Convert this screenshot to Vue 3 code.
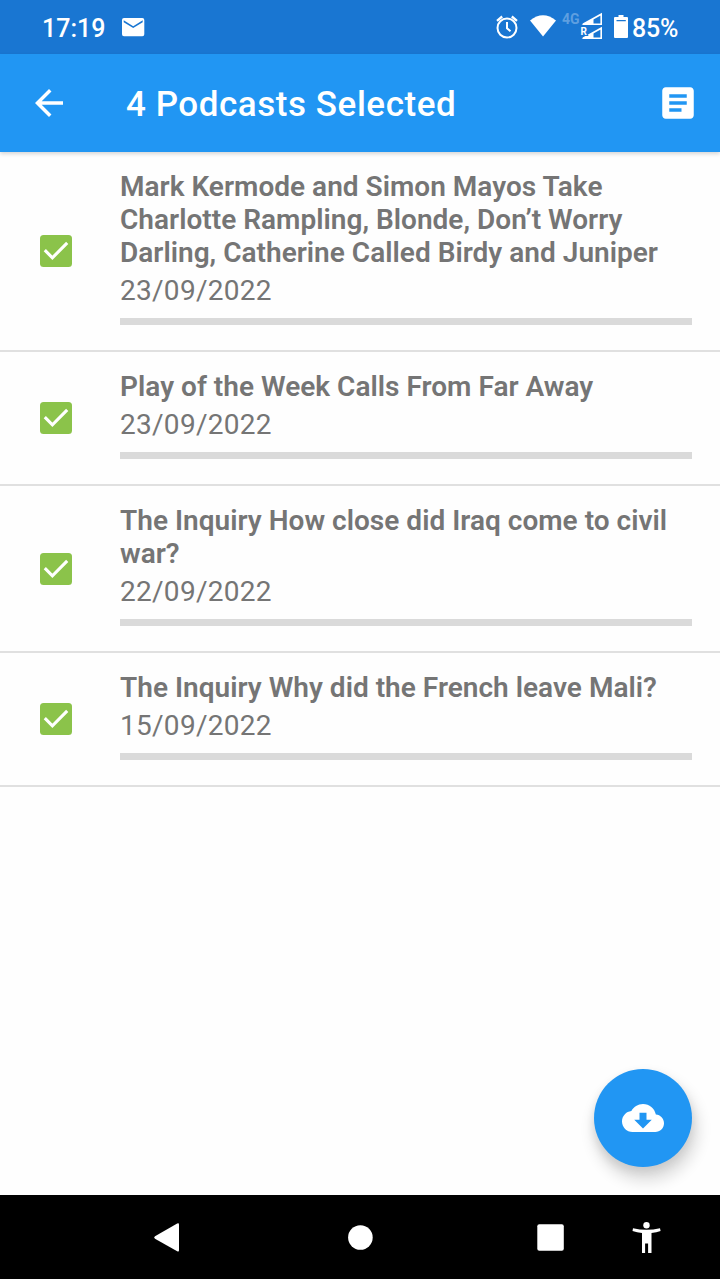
<script setup>
const podcasts = [
  { title: 'Mark Kermode and Simon Mayos Take Charlotte Rampling, Blonde, Don’t Worry Darling, Catherine Called Birdy and Juniper', date: '23/09/2022' },
  { title: 'Play of the Week Calls From Far Away', date: '23/09/2022' },
  { title: 'The Inquiry How close did Iraq come to civil war?', date: '22/09/2022' },
  { title: 'The Inquiry Why did the French leave Mali?', date: '15/09/2022' },
]
</script>

<template>
  <div class="screen">
    <header class="status">
      <span class="clock">17:19</span>
      <svg class="mail" width="28" height="28" viewBox="0 0 28 28"><path fill="#fff" d="M5 5h18.300q2 0 2 2v14.200q0 2-2 2H5q-2 0-2-2V7q0-2 2-2zM4.700 7.300v1.900l9.500 5.900 9.500-5.900V7.300l-9.500 5.900z" fill-rule="evenodd" /></svg>
      <svg class="indicators" width="136" height="54" viewBox="0 0 136 54">
        <g fill="none" stroke="#fff" stroke-width="2">
          <circle cx="13" cy="28" r="9.500" />
          <path d="M13 22v6.300l3.500 3" />
          <path d="M3 20.800l5.200-4.300M23 20.800l-5.200-4.300" stroke-width="2.300" />
        </g>
        <path fill="#fff" d="M36 20.600Q49 9.800 62 20.600L49 36.500z" />
        <text class="network" x="68" y="24">4G</text>
        <g fill="none" stroke="#fff" stroke-width="1.600">
          <path d="M89 24.200 107.200 14.200v10zM98.700 19.500v4.700" />
          <path d="M89 38.200 107.200 28.200v10zM98.700 33.500v4.700" />
        </g>
        <path fill="#fff" d="M87.500 25 98.500 19v6zM87.500 39 98.500 33v6z" />
        <text class="roaming" x="86.500" y="34.500">R</text>
        <path fill="#fff" fill-rule="evenodd" d="M124.500 15h5v2h3.500q1 0 1 1v19q0 1-1 1h-12q-1 0-1-1V18q0-1 1-1h3.500zM122.500 20v1.300h9.300v-1.300z" />
      </svg>
      <span class="battery">85%</span>
    </header>

    <nav class="toolbar">
      <svg class="back" width="42" height="42" viewBox="0 0 24 24"><path fill="#fff" d="M20 11H7.830l5.590-5.590L12 4l-8 8 8 8 1.410-1.410L7.830 13H20z" /></svg>
      <h1>4 Podcasts Selected</h1>
      <svg class="notes" width="42" height="42" viewBox="0 0 24 24"><path fill="#fff" d="M19 3H5c-1.100 0-2 .9-2 2v14c0 1.100.9 2 2 2h14c1.100 0 2-.9 2-2V5c0-1.100-.9-2-2-2zm-5 14H7v-2h7zm3-4H7v-2h10zm0-4H7V7h10z" /></svg>
    </nav>

    <main>
      <article v-for="item in podcasts" :key="item.title" class="row">
        <svg class="check" width="32" height="32" viewBox="0 0 32 32">
          <rect width="32" height="32" rx="3.500" fill="#8bc34a" />
          <path d="M4.800 15.200 12.400 22.800 27.200 7.900" fill="none" stroke="#fff" stroke-width="3.100" />
        </svg>
        <div class="body">
          <h2>{{ item.title }}</h2>
          <p>{{ item.date }}</p>
          <div class="bar"></div>
        </div>
      </article>
      <button class="fab" aria-label="Download">
        <svg width="42" height="42" viewBox="0 0 24 24"><path fill="#fff" d="M19.350 10.040C18.670 6.590 15.640 4 12 4 9.110 4 6.600 5.640 5.350 8.040 2.340 8.360 0 10.910 0 14c0 3.310 2.690 6 6 6h13c2.760 0 5-2.240 5-5 0-2.640-2.050-4.780-4.650-4.960zM17 13l-5 5-5-5h3V9h4v4z" /></svg>
      </button>
    </main>

    <footer class="navbar">
      <svg width="720" height="84" viewBox="0 0 720 84" fill="#fff">
        <path d="M155 41.300 177.200 28.500q1.800-.9 1.800 1v25.800q0 1.900-1.800 1L155 43.700q-1.800-1.200 0-2.400z" />
        <circle cx="360.400" cy="42.500" r="12.300" />
        <rect x="537.300" y="29.300" width="26.500" height="26.500" rx="2" />
        <circle cx="646.500" cy="30.300" r="3.200" />
        <path d="M633 33.300q13.500 3 27 0l.6 2.800q-4 1.400-9.100 1.900V58h-3.400v-9.500h-3V58h-3.100V38q-5-.5-9.500-1.900z" />
      </svg>
    </footer>
  </div>
</template>

<style>
html, body { margin: 0; background: #fefefe; }
</style>

<style scoped>
.screen { display: flex; flex-direction: column; width: 720px; height: 1280px; overflow: hidden; background: #fefefe; font-family: Roboto, sans-serif; }
.status { display: flex; align-items: center; flex: none; height: 54px; box-sizing: border-box; padding-left: 42px; background: #1976d2; color: #fff; font-size: 25px; font-weight: 500; }
.clock { width: 77px; padding-top: 2px; }
.indicators { margin-left: 347px; }
.network { font-size: 14px; font-weight: 700; fill: #5e9fe0; }
.roaming { font-size: 10px; font-weight: 700; fill: #fff; stroke: #1976d2; stroke-width: 2px; paint-order: stroke; }
.battery { padding-top: 2px; margin-left: 2px; letter-spacing: -.2px; }
.toolbar { display: flex; align-items: center; flex: none; height: 98px; box-sizing: border-box; padding: 0 21px 0 28px; background: #2196f3; color: #fff; box-shadow: 0 2px 4px rgba(0, 0, 0, .16); z-index: 1; }
h1 { flex: 1; margin: 2px 0 0 56px; font-size: 35px; font-weight: 500; letter-spacing: .55px; white-space: nowrap; }
main { position: relative; flex: none; height: 1043px; overflow: hidden; }
.row { display: flex; align-items: center; padding: 0 28px 0 40px; border-bottom: 2px solid #e0e0e0; }
.check { flex: none; margin-right: 48px; }
.body { flex: 1; padding: 18px 0 25px; color: #757575; font-size: 28px; line-height: 33px; }
h2 { margin: 0; font-size: 28px; font-weight: 600; letter-spacing: .02px; }
p { margin: 5px 0 11px; letter-spacing: .28px; }
.bar { height: 7px; background: #dadada; }
.fab { position: absolute; right: 28px; bottom: 28px; display: flex; align-items: center; justify-content: center; width: 98px; height: 98px; padding: 0; border: 0; border-radius: 50%; background: #2196f3; box-shadow: 3px 11px 14px 4px rgba(0, 0, 0, .12), 0 5px 8px rgba(0, 0, 0, .1); }
.navbar { flex: none; height: 84px; background: #000; }
.navbar svg { display: block; }
</style>
